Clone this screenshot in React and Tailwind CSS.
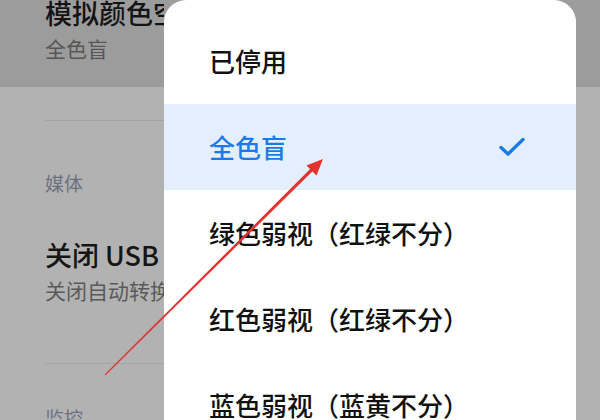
import React from "react";

const options = [
    { label: "已停用" },
    { label: "全色盲", selected: true },
    { label: "绿色弱视（红绿不分）" },
    { label: "红色弱视（红绿不分）" },
    { label: "蓝色弱视（蓝黄不分）" },
];

const font = { fontFamily: '"Noto Sans CJK SC", "Noto Sans", sans-serif' };

const Check = () => (
    <svg width="26" height="20" viewBox="0 0 26 20" fill="none">
        <path
            d="M2 10.5 L9 17 L24 2.5"
            stroke="#1b7be6"
            strokeWidth="3.4"
            strokeLinecap="round"
            strokeLinejoin="round"
        />
    </svg>
);

const RedArrow = () => (
    <svg
        className="absolute inset-0 pointer-events-none"
        width="600"
        height="420"
        viewBox="0 0 600 420"
    >
        {/* tapered shaft, thin at the tail */}
        <polygon
            points="105.4,375.4 104.6,374.6 310.4,168.7 312.8,171.1"
            fill="#e5322d"
        />
        <polygon points="323,159 316.5,175.5 306.5,165.5" fill="#e5322d" />
    </svg>
);

const App = () => {
    return (
        <div
            className="relative w-[600px] h-[420px] overflow-hidden bg-[#b2b2b2]"
            style={font}
        >
            {/* dimmed settings page, clipped where the menu covers it */}
            <div className="h-[87px] bg-[#9c9c9c]">
                <div className="w-[164px] h-full overflow-hidden pl-[45px] flex flex-col">
                    <div className="mt-[-3px] text-[27px] leading-[32px] font-medium text-[#141414] whitespace-nowrap">
                        模拟颜色空间
                    </div>
                    <div className="mt-[5px] text-[21px] leading-[28px] text-[#565656]">
                        全色盲
                    </div>
                </div>
            </div>

            <div className="w-[164px] overflow-hidden pl-[45px] flex flex-col">
                <div className="mt-[33px] h-px bg-[#a4a4a4]" />
                <div className="mt-[50px] text-[19px] leading-[24px] text-[#6c7080]">
                    媒体
                </div>
                <div className="mt-[44px] text-[27px] leading-[32px] font-medium text-[#151515] whitespace-nowrap">
                    关闭 USB
                </div>
                <div className="mt-[5px] text-[21px] leading-[28px] text-[#5a5a5a] whitespace-nowrap">
                    关闭自动转换
                </div>
                <div className="mt-[59px] h-px bg-[#a4a4a4]" />
                <div className="mt-[42px] text-[19px] leading-[24px] text-[#6c7080]">
                    监控
                </div>
            </div>

            {/* option menu */}
            <div className="absolute left-[164px] top-0 w-[412px] h-[440px] bg-white rounded-t-[22px] pt-[18px] flex flex-col">
                {options.map((o) => (
                    <div
                        key={o.label}
                        className={
                            o.selected
                                ? "h-[86px] shrink-0 flex items-center justify-between pl-[45px] pr-[51px] bg-[#e3effd] text-[#1b7be6]"
                                : "h-[86px] shrink-0 flex items-center pl-[45px] text-[#111111]"
                        }
                    >
                        <span className="text-[26px] leading-[32px] font-medium whitespace-nowrap">
                            {o.label}
                        </span>
                        {o.selected && <Check />}
                    </div>
                ))}
            </div>

            <RedArrow />
        </div>
    );
};

export default App;
